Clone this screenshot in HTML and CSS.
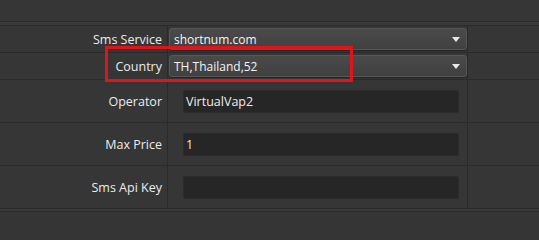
FILE: index.html
```html
<!DOCTYPE html>
<html>
<head>
<meta charset="utf-8">
<link rel="stylesheet" href="styles.css">
</head>
<body>
<div class="page">
  <div class="topband"></div>
  <div class="sep"></div>
  <div class="form">
    <div class="label row-s">Sms Service</div>
    <div class="field row-s"><div class="combo"><span>shortnum.com</span><span class="arrow"></span></div></div>
    <div class="rest row-s"></div>

    <div class="label row-s">Country</div>
    <div class="field row-s"><div class="combo"><span>TH,Thailand,52</span><span class="arrow"></span></div></div>
    <div class="rest row-s"></div>

    <div class="label row-l">Operator</div>
    <div class="field row-l"><div class="edit">VirtualVap2</div></div>
    <div class="rest row-l"></div>

    <div class="label row-l">Max Price</div>
    <div class="field row-l"><div class="edit">1</div></div>
    <div class="rest row-l"></div>

    <div class="label row-l">Sms Api Key</div>
    <div class="field row-l"><div class="edit"></div></div>
    <div class="rest row-l"></div>
  </div>
  <div class="sep2"></div>
  <div class="highlight"></div>
</div>
</body>
</html>
```
FILE: styles.css
```css
html, body {
  margin: 0;
  padding: 0;
  background: #353535;
}
.page {
  position: relative;
  width: 539px;
  height: 232px;
  overflow: hidden;
  font-family: "Open Sans", "Noto Sans", sans-serif;
  font-size: 12.5px;
  color: #ececec;
}
.topband {
  height: 21px;
  background: #363636;
}
.sep {
  height: 3px;
  border-top: 1px solid #2b2b2b;
  border-bottom: 1px solid #2b2b2b;
  background: #3a3a3a;
}
.form {
  display: grid;
  grid-template-columns: 167px 301px 1fr;
}
.form > div {
  border-bottom: 1px solid #2a2a2a;
  box-sizing: border-box;
  display: flex;
  align-items: center;
  background: #363636;
}
.row-s { height: 27px; }
.row-l { height: 43px; }
.form .field {
  border-left: 1px solid #2a2a2a;
  border-right: 1px solid #2a2a2a;
}
.label {
  justify-content: flex-end;
  padding-right: 5px;
}
.combo {
  box-sizing: border-box;
  margin-left: 1px;
  width: 298px;
  height: 22px;
  border: 1px solid #575757;
  border-radius: 3px;
  background: linear-gradient(#4a4a4a, #404040);
  display: flex;
  align-items: center;
  justify-content: space-between;
  padding: 0 6px 0 4px;
  color: #f4f4f4;
  font-size: 12px;
  box-shadow: 0 1px 1px rgba(0,0,0,0.35);
}
.arrow {
  width: 0;
  height: 0;
  border-left: 4.5px solid transparent;
  border-right: 4.5px solid transparent;
  border-top: 5px solid #e8e8e8;
  margin-top: 1px;
}
.edit {
  box-sizing: border-box;
  margin-left: 15px;
  width: 276px;
  height: 23px;
  background: #262626;
  border: 1px solid #2b2b2b;
  border-radius: 2px;
  display: flex;
  align-items: center;
  padding-left: 2px;
  color: #eeeeee;
  font-size: 12.5px;
}
.sep2 {
  height: 2px;
  background: #3a3a3a;
  border-bottom: 1px solid #2b2b2b;
}
.highlight {
  position: absolute;
  left: 105px;
  top: 46px;
  width: 242px;
  height: 30px;
  border: 3px solid #e0141b;
}
```
